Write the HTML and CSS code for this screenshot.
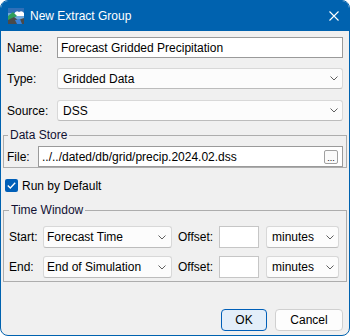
FILE: index.html
```html
<!DOCTYPE html>
<html>
<head>
<meta charset="utf-8">
<title>New Extract Group</title>
<link rel="stylesheet" href="styles.css">
</head>
<body>
<div class="window">
  <div class="titlebar">
    <svg class="app-icon" width="16" height="16" viewBox="0 0 16 16">
      <rect width="16" height="16" fill="#6fa8dc"/>
      <rect width="16" height="5" fill="#2f6fb8"/>
      <path d="M6 6 Q8 2 11 4 Q14 2 16 5 V8 H6Z" fill="#ffffff"/>
      <path d="M0 8 L5 4 L9 8 L0 13Z" fill="#2e9e5a"/>
      <path d="M0 12 L6 9 L10 12 L16 10 V16 H0Z" fill="#4a4a4a"/>
      <path d="M7 12 L12 11 L14 16 H9Z" fill="#3b82d9"/>
    </svg>
    <span class="title">New Extract Group</span>
    <svg class="close" width="10" height="10" viewBox="0 0 10 10">
      <path d="M0.5 0.5 L9.5 9.5 M9.5 0.5 L0.5 9.5" stroke="#ffffff" stroke-width="1.1" fill="none"/>
    </svg>
  </div>
  <div class="content">
    <div class="row">
      <span class="lbl">Name:</span>
      <div class="textfield">Forecast Gridded Precipitation</div>
    </div>
    <div class="row row-type">
      <span class="lbl">Type:</span>
      <div class="combo"><span>Gridded Data</span><svg class="chev" width="8" height="5" viewBox="0 0 8 5"><polyline points="0.5,0.5 4,4 7.5,0.5" fill="none" stroke="#606060" stroke-width="1"/></svg></div>
    </div>
    <div class="row row-source">
      <span class="lbl">Source:</span>
      <div class="combo"><span>DSS</span><svg class="chev" width="8" height="5" viewBox="0 0 8 5"><polyline points="0.5,0.5 4,4 7.5,0.5" fill="none" stroke="#606060" stroke-width="1"/></svg></div>
    </div>
    <fieldset class="group datastore">
      <legend>Data Store</legend>
      <div class="frow">
        <span class="lbl-file">File:</span>
        <div class="textfield file"><span>../../dated/db/grid/precip.2024.02.dss</span><span class="browse">...</span></div>
      </div>
    </fieldset>
    <div class="check-row">
      <span class="checkbox"><svg width="9" height="7" viewBox="0 0 9 7"><polyline points="0.8,3.5 3.3,6 8.2,0.8" fill="none" stroke="#ffffff" stroke-width="1.3"/></svg></span>
      <span>Run by Default</span>
    </div>
    <fieldset class="group timewin">
      <legend>Time Window</legend>
      <div class="trow">
        <span class="tlbl">Start:</span>
        <div class="combo tcombo"><span>Forecast Time</span><svg class="chev" width="8" height="5" viewBox="0 0 8 5"><polyline points="0.5,0.5 4,4 7.5,0.5" fill="none" stroke="#606060" stroke-width="1"/></svg></div>
        <span class="off-lbl">Offset:</span>
        <div class="off-field"></div>
        <div class="combo unit"><span>minutes</span><svg class="chev" width="8" height="5" viewBox="0 0 8 5"><polyline points="0.5,0.5 4,4 7.5,0.5" fill="none" stroke="#606060" stroke-width="1"/></svg></div>
      </div>
      <div class="trow">
        <span class="tlbl">End:</span>
        <div class="combo tcombo"><span>End of Simulation</span><svg class="chev" width="8" height="5" viewBox="0 0 8 5"><polyline points="0.5,0.5 4,4 7.5,0.5" fill="none" stroke="#606060" stroke-width="1"/></svg></div>
        <span class="off-lbl">Offset:</span>
        <div class="off-field"></div>
        <div class="combo unit"><span>minutes</span><svg class="chev" width="8" height="5" viewBox="0 0 8 5"><polyline points="0.5,0.5 4,4 7.5,0.5" fill="none" stroke="#606060" stroke-width="1"/></svg></div>
      </div>
    </fieldset>
    <div class="buttons">
      <button class="btn ok">OK</button>
      <button class="btn cancel">Cancel</button>
    </div>
  </div>
</div>
</body>
</html>
```

FILE: styles.css
```css
html, body {
  margin: 0;
  padding: 0;
  background: #ffffff;
}
body {
  font-family: "Liberation Sans", Arial, sans-serif;
  font-size: 12px;
  color: #000000;
}
.window {
  width: 350px;
  height: 336px;
  box-sizing: border-box;
  border: 1px solid #0062af;
  border-radius: 8px;
  background: #f0f0f0;
  display: flex;
  flex-direction: column;
  overflow: hidden;
}
.titlebar {
  height: 30px;
  flex: none;
  background: #0062af;
  display: flex;
  align-items: center;
  color: #ffffff;
}
.app-icon {
  margin-left: 7px;
  flex: none;
}
.title {
  margin-left: 6px;
  font-size: 12px;
}
.close {
  margin-left: auto;
  margin-right: 10px;
  flex: none;
}
.content {
  flex: 1;
  display: flex;
  flex-direction: column;
  padding: 6px 2px 4px;
}
.row {
  display: flex;
  align-items: center;
  height: 21px;
  padding: 0 4px;
}
.row-type {
  margin-top: 10px;
}
.row-source {
  margin-top: 11px;
}
.lbl {
  width: 50px;
  flex: none;
}
.textfield {
  flex: 1;
  height: 21px;
  box-sizing: border-box;
  border: 1px solid #9a9a9a;
  background: #ffffff;
  padding: 0 3px;
  display: flex;
  align-items: center;
  white-space: nowrap;
}
.combo {
  flex: 1;
  height: 21px;
  box-sizing: border-box;
  border: 1px solid #d8d8d8;
  border-bottom-color: #bcbcbc;
  border-radius: 3px;
  background: #fcfcfc;
  padding: 0 4px 0 5px;
  display: flex;
  align-items: center;
  justify-content: space-between;
  white-space: nowrap;
}
.chev {
  flex: none;
}
.group {
  margin: 7px 0 0;
  border: 1px solid #adadad;
  min-width: 0;
}
.group legend {
  line-height: 15px;
  padding: 0 2px;
  color: #111133;
}
.datastore {
  padding: 3px 3px 0;
}
.datastore legend {
  margin-left: 1px;
}
.frow {
  display: flex;
  align-items: center;
  height: 21px;
}
.lbl-file {
  width: 31px;
  flex: none;
}
.file {
  padding: 0 4px 0 3px;
  justify-content: space-between;
}
.browse {
  width: 14px;
  height: 14px;
  box-sizing: border-box;
  border: 1px solid #a0a0a0;
  border-radius: 2px;
  background: #fafafa;
  font-size: 9px;
  line-height: 14px;
  text-align: center;
  flex: none;
}
.check-row {
  display: flex;
  align-items: center;
  height: 21px;
  margin-top: 7px;
  padding-left: 2px;
}
.checkbox {
  width: 13px;
  height: 13px;
  background: #005fb8;
  border-radius: 2px;
  display: flex;
  align-items: center;
  justify-content: center;
  margin-right: 4px;
  flex: none;
}
.timewin {
  padding: 8px 7px 3px 5px;
}
.trow {
  display: flex;
  align-items: center;
  height: 22px;
}
.trow + .trow {
  margin-top: 8px;
}
.tlbl {
  width: 34px;
  flex: none;
}
.tcombo {
  width: 129px;
  flex: none;
  height: 22px;
  padding-left: 3px;
  padding-right: 5px;
}
.off-lbl {
  margin-left: 6px;
  width: 41px;
  flex: none;
}
.off-field {
  width: 40px;
  height: 22px;
  box-sizing: border-box;
  border: 1px solid #c6c6c6;
  background: #ffffff;
  flex: none;
}
.unit {
  margin-left: 7px;
  width: 73px;
  height: 22px;
  flex: none;
}
.buttons {
  margin-top: auto;
  display: flex;
  justify-content: flex-end;
  gap: 8px;
  padding-right: 4px;
}
.btn {
  height: 22px;
  font-family: inherit;
  font-size: 12px;
  color: #000000;
  border-radius: 4px;
  border: 1px solid #d0d0d0;
  background: #fdfdfd;
  padding: 0;
}
.ok {
  width: 46px;
  border-color: #005fb8;
  background: #e3eef9;
}
.cancel {
  width: 68px;
}
```
